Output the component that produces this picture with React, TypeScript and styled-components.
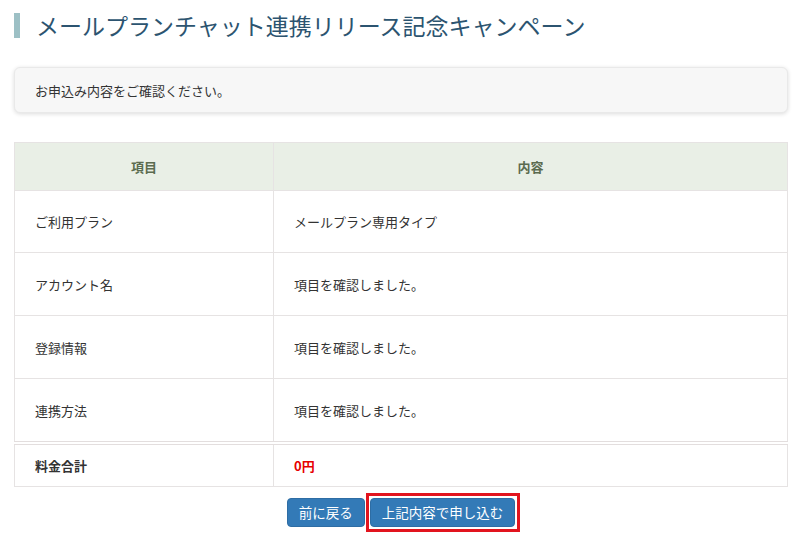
import React from "react";
import styled, { createGlobalStyle } from "styled-components";

const GlobalStyle = createGlobalStyle`
  html, body { margin: 0; padding: 0; background: #fff; }
  body {
    font-family: "Noto Sans CJK JP", "Noto Sans", sans-serif;
    color: #333;
  }
`;

const Page = styled.div`
  padding: 13px 12px 14px 14px;
  display: flex;
  flex-direction: column;
`;

const Title = styled.h1`
  margin: 0;
  display: flex;
  align-items: center;
  gap: 16px;
  height: 25px;
  font-size: 23px;
  font-weight: 400;
  line-height: 25px;
  color: #2c5470;
  &::before {
    content: "";
    display: block;
    width: 6px;
    height: 25px;
    background: #9dc0c5;
  }
`;

const Notice = styled.div`
  margin-top: 29px;
  height: 44px;
  display: flex;
  align-items: center;
  padding: 0 20px;
  background: #f7f7f7;
  border: 1px solid #e9e9e9;
  border-radius: 6px;
  box-shadow: 0 1px 4px rgba(0, 0, 0, 0.14);
  font-size: 13px;
  color: #333;
`;

const Table = styled.table`
  margin-top: 29px;
  width: 100%;
  border-collapse: collapse;
  border: 1px solid #e6e3e3;
  font-size: 13px;
`;

const HeadCell = styled.th<{ $w?: string }>`
  height: 47px;
  padding: 0;
  background: #e9efe6;
  color: #5b6b4f;
  font-weight: 700;
  text-align: center;
  border: 1px solid #e6e3e3;
  width: ${(p) => p.$w ?? "auto"};
`;

const Cell = styled.td<{ $h: number; $total?: boolean; $red?: boolean }>`
  height: ${(p) => p.$h}px;
  padding: 0 20px;
  border: 1px solid #e6e3e3;
  ${(p) => (p.$total ? "border-top: 4px double #e3dede;" : "")}
  font-weight: ${(p) => (p.$total ? 700 : 400)};
  color: ${(p) => (p.$red ? "#e60000" : "#333")};
  vertical-align: middle;
`;

const Buttons = styled.div`
  display: flex;
  justify-content: center;
  align-items: center;
  gap: 5px;
  margin-top: 11px;
`;

const Button = styled.button`
  height: 29px;
  padding: 0 11px;
  background: #337ab7;
  border: 1px solid #2e6da4;
  border-radius: 4px;
  color: #fff;
  font-family: inherit;
  font-size: 13.5px;
  line-height: 27px;
  cursor: pointer;
`;

const Marked = styled.span`
  position: relative;
  display: flex;
  &::after {
    content: "";
    position: absolute;
    top: -5px;
    bottom: -5px;
    left: -4px;
    right: -5px;
    border: 3px solid #e2141e;
    pointer-events: none;
  }
`;

const rows = [
  { label: "ご利用プラン", value: "メールプラン専用タイプ", h: 61 },
  { label: "アカウント名", value: "項目を確認しました。", h: 62 },
  { label: "登録情報", value: "項目を確認しました。", h: 62 },
  { label: "連携方法", value: "項目を確認しました。", h: 62 },
];

export default function App() {
  return (
    <>
      <GlobalStyle />
      <Page>
        <Title>メールプランチャット連携リリース記念キャンペーン</Title>
        <Notice>お申込み内容をご確認ください。</Notice>
        <Table>
          <thead>
            <tr>
              <HeadCell $w="258px">項目</HeadCell>
              <HeadCell>内容</HeadCell>
            </tr>
          </thead>
          <tbody>
            {rows.map((r) => (
              <tr key={r.label}>
                <Cell $h={r.h}>{r.label}</Cell>
                <Cell $h={r.h}>{r.value}</Cell>
              </tr>
            ))}
            <tr>
              <Cell $h={41} $total>
                料金合計
              </Cell>
              <Cell $h={41} $total $red>
                0円
              </Cell>
            </tr>
          </tbody>
        </Table>
        <Buttons>
          <Button>前に戻る</Button>
          <Marked>
            <Button>上記内容で申し込む</Button>
          </Marked>
        </Buttons>
      </Page>
    </>
  );
}
